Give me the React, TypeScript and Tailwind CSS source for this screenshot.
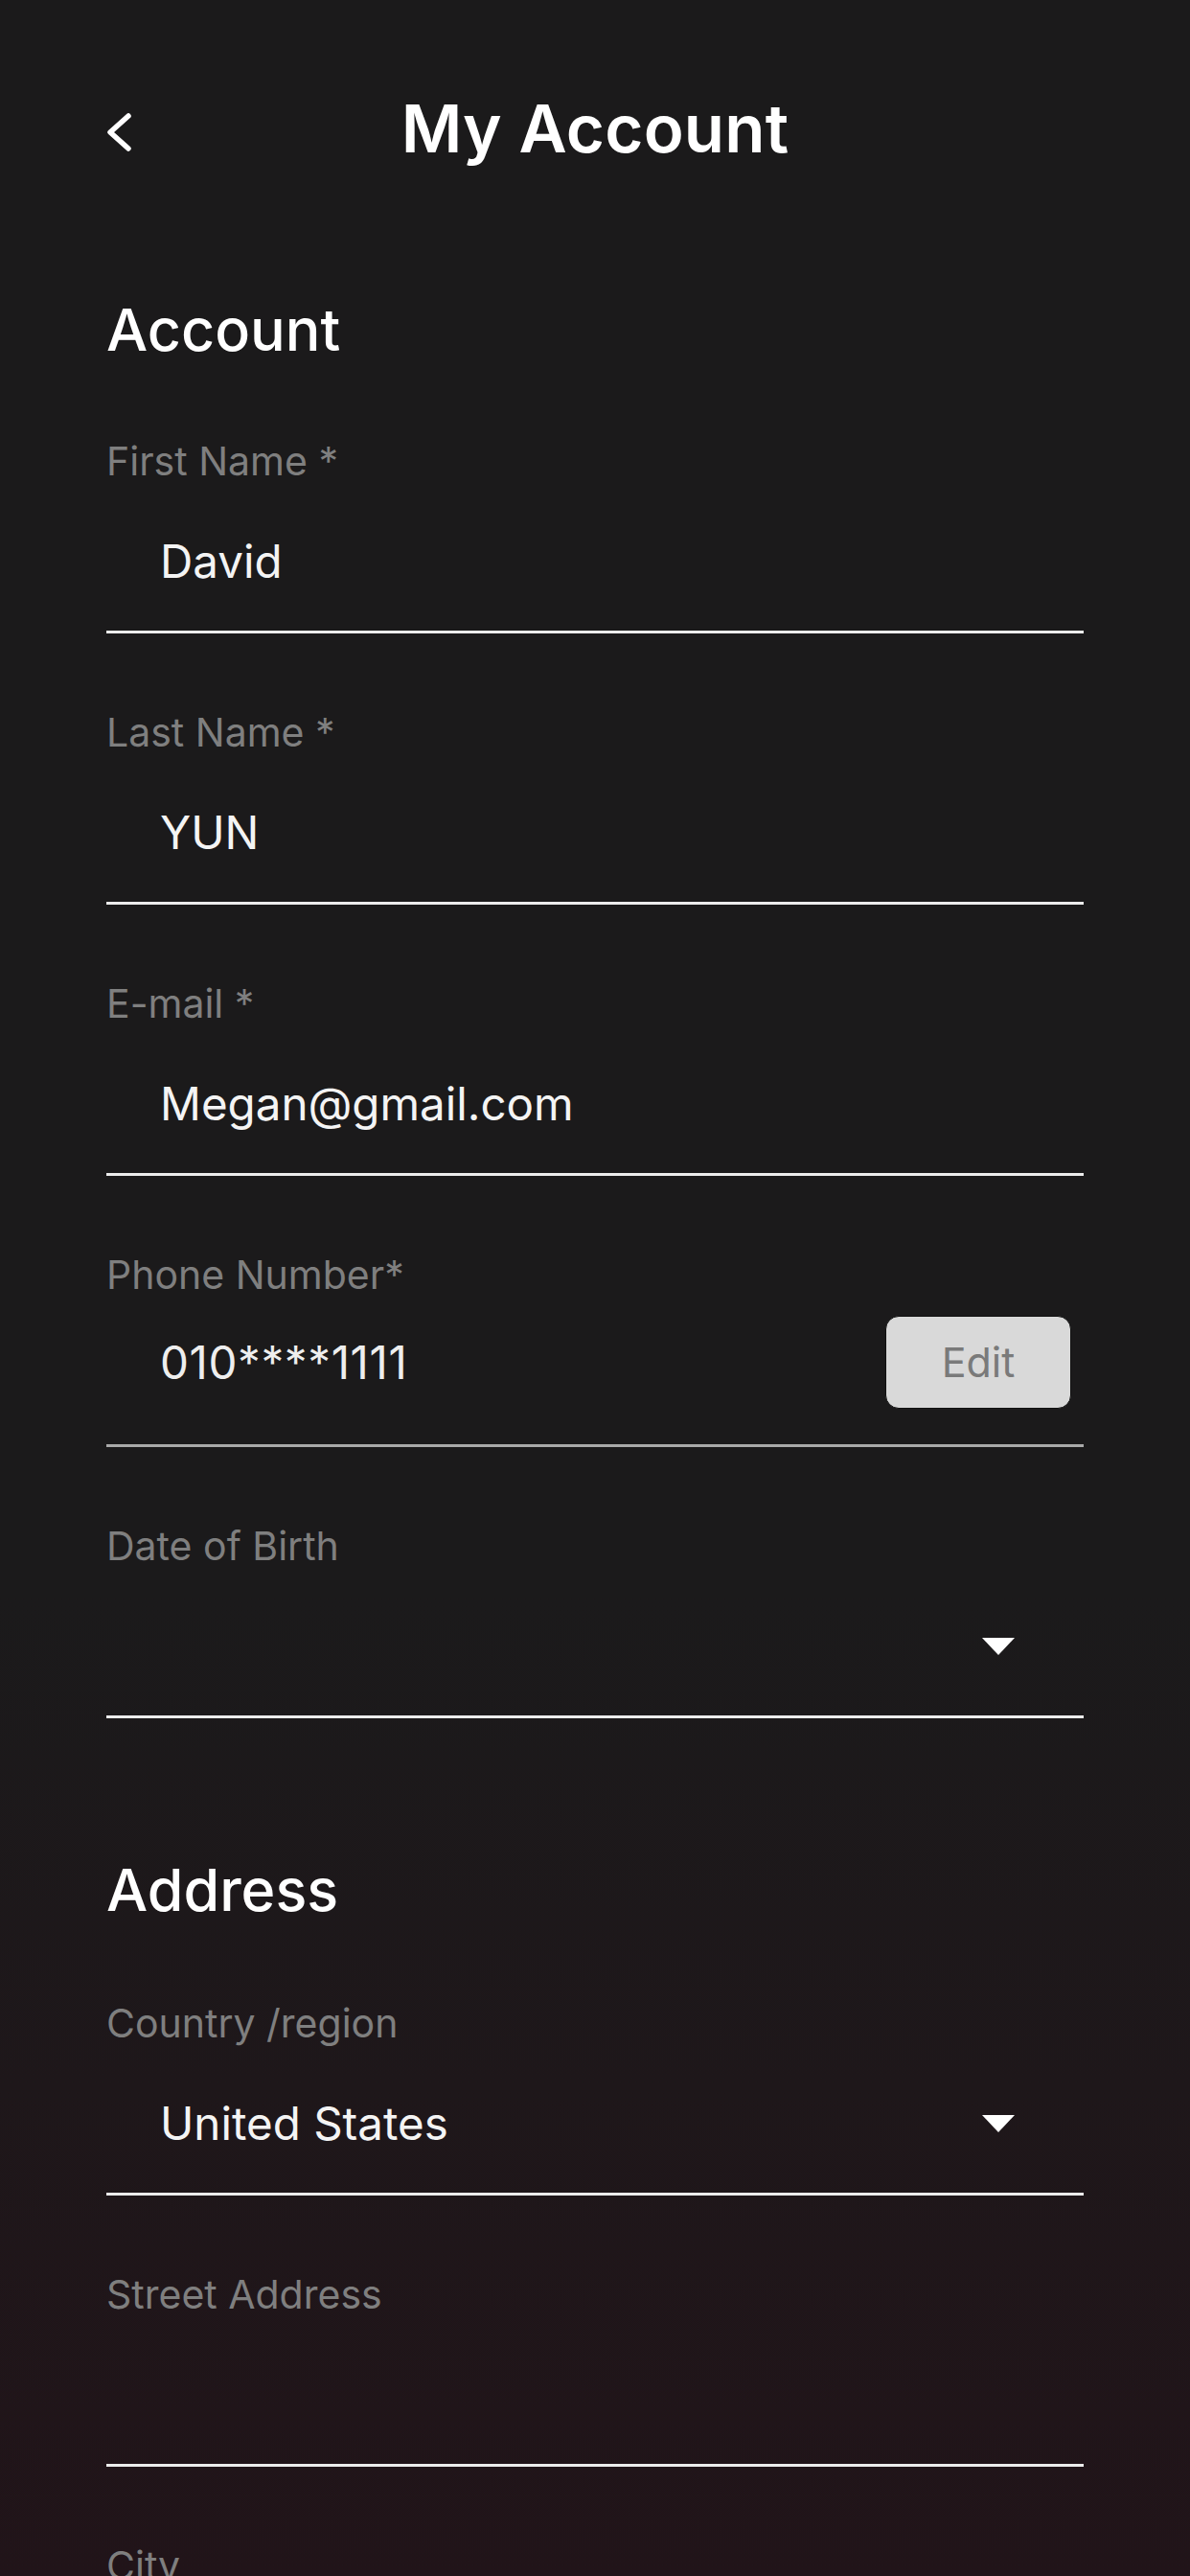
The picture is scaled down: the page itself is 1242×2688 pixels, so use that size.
import type { ReactNode } from 'react'

const FONT = { fontFamily: 'Inter, "Noto Sans", "Liberation Sans", sans-serif' }

function Caret() {
  return (
    <svg width="34" height="18" viewBox="0 0 34 18" className="shrink-0">
      <polygon points="0,0 34,0 17,18" fill="#ffffff" />
    </svg>
  )
}

function Field({
  label,
  children,
  first = false,
}: {
  label: string
  children?: ReactNode
  first?: boolean
}) {
  return (
    <div className={first ? '' : 'mt-[78px]'}>
      <div className="h-[50px] leading-[50px] text-[41px] text-[#7f7f7f]">{label}</div>
      <div className="mt-[32px] pb-[24px] border-b-[3px] border-[#ececec]">
        <div className="h-[96px] flex items-center pl-[56px] pr-[72px] text-[47.5px] text-[#f4f4f4]">
          {children}
        </div>
      </div>
    </div>
  )
}

export default function App() {
  return (
    <div
      style={FONT}
      className="w-full h-[2688px] overflow-hidden bg-[linear-gradient(180deg,#1b1a1b_0%,#1b1a1b_62%,#211419_100%)] text-white"
    >
      {/* Header */}
      <div className="mt-[74px] h-[120px] px-[111px] grid grid-cols-[1fr_auto_1fr] items-center">
        <button className="justify-self-start -ml-[1px] translate-y-[4px]" aria-label="Back">
          <svg width="30" height="44" viewBox="0 0 30 44" fill="none">
            <polyline
              points="24,5 5,22 24,39"
              stroke="#ffffff"
              strokeWidth="5.5"
              strokeLinecap="round"
              strokeLinejoin="round"
            />
          </svg>
        </button>
        <h1 className="text-[69px] leading-[80px] font-semibold tracking-[0.2px]">My Account</h1>
        <div />
      </div>

      <div className="px-[111px]">
        {/* Account */}
        <h2 className="mt-[114px] h-[72px] leading-[72px] text-[61px] font-medium">Account</h2>
        <div className="mt-[76px]">
          <Field label="First Name *" first>
            David
          </Field>
          <Field label="Last Name *">YUN</Field>
          <Field label="E-mail *">Megan@gmail.com</Field>

          {/* Phone */}
          <div className="mt-[78px]">
            <div className="h-[50px] leading-[50px] text-[41px] text-[#7f7f7f]">Phone Number*</div>
            <div className="mt-[18px] pb-[37px] border-b-[3px] border-[#a9a9a9]">
              <div className="h-[97px] flex items-center justify-between pl-[56px] pr-[13px]">
                <span className="text-[47.5px] tracking-[0.6px] text-[#eeeeee]">010****1111</span>
                <button className="w-[194px] h-[97px] rounded-[14px] bg-[#d9d9d9] border border-[#111] text-[43px] text-[#7a7a7a]">
                  Edit
                </button>
              </div>
            </div>
          </div>

          <Field label="Date of Birth">
            <div className="flex-1" />
            <Caret />
          </Field>
        </div>

        {/* Address */}
        <h2 className="mt-[143px] h-[72px] leading-[72px] text-[61px] font-medium">Address</h2>
        <div className="mt-[78px]">
          <Field label="Country /region" first>
            <span className="flex-1">United States</span>
            <Caret />
          </Field>
          <Field label="Street Address" />
          <Field label="City" />
        </div>
      </div>
    </div>
  )
}
